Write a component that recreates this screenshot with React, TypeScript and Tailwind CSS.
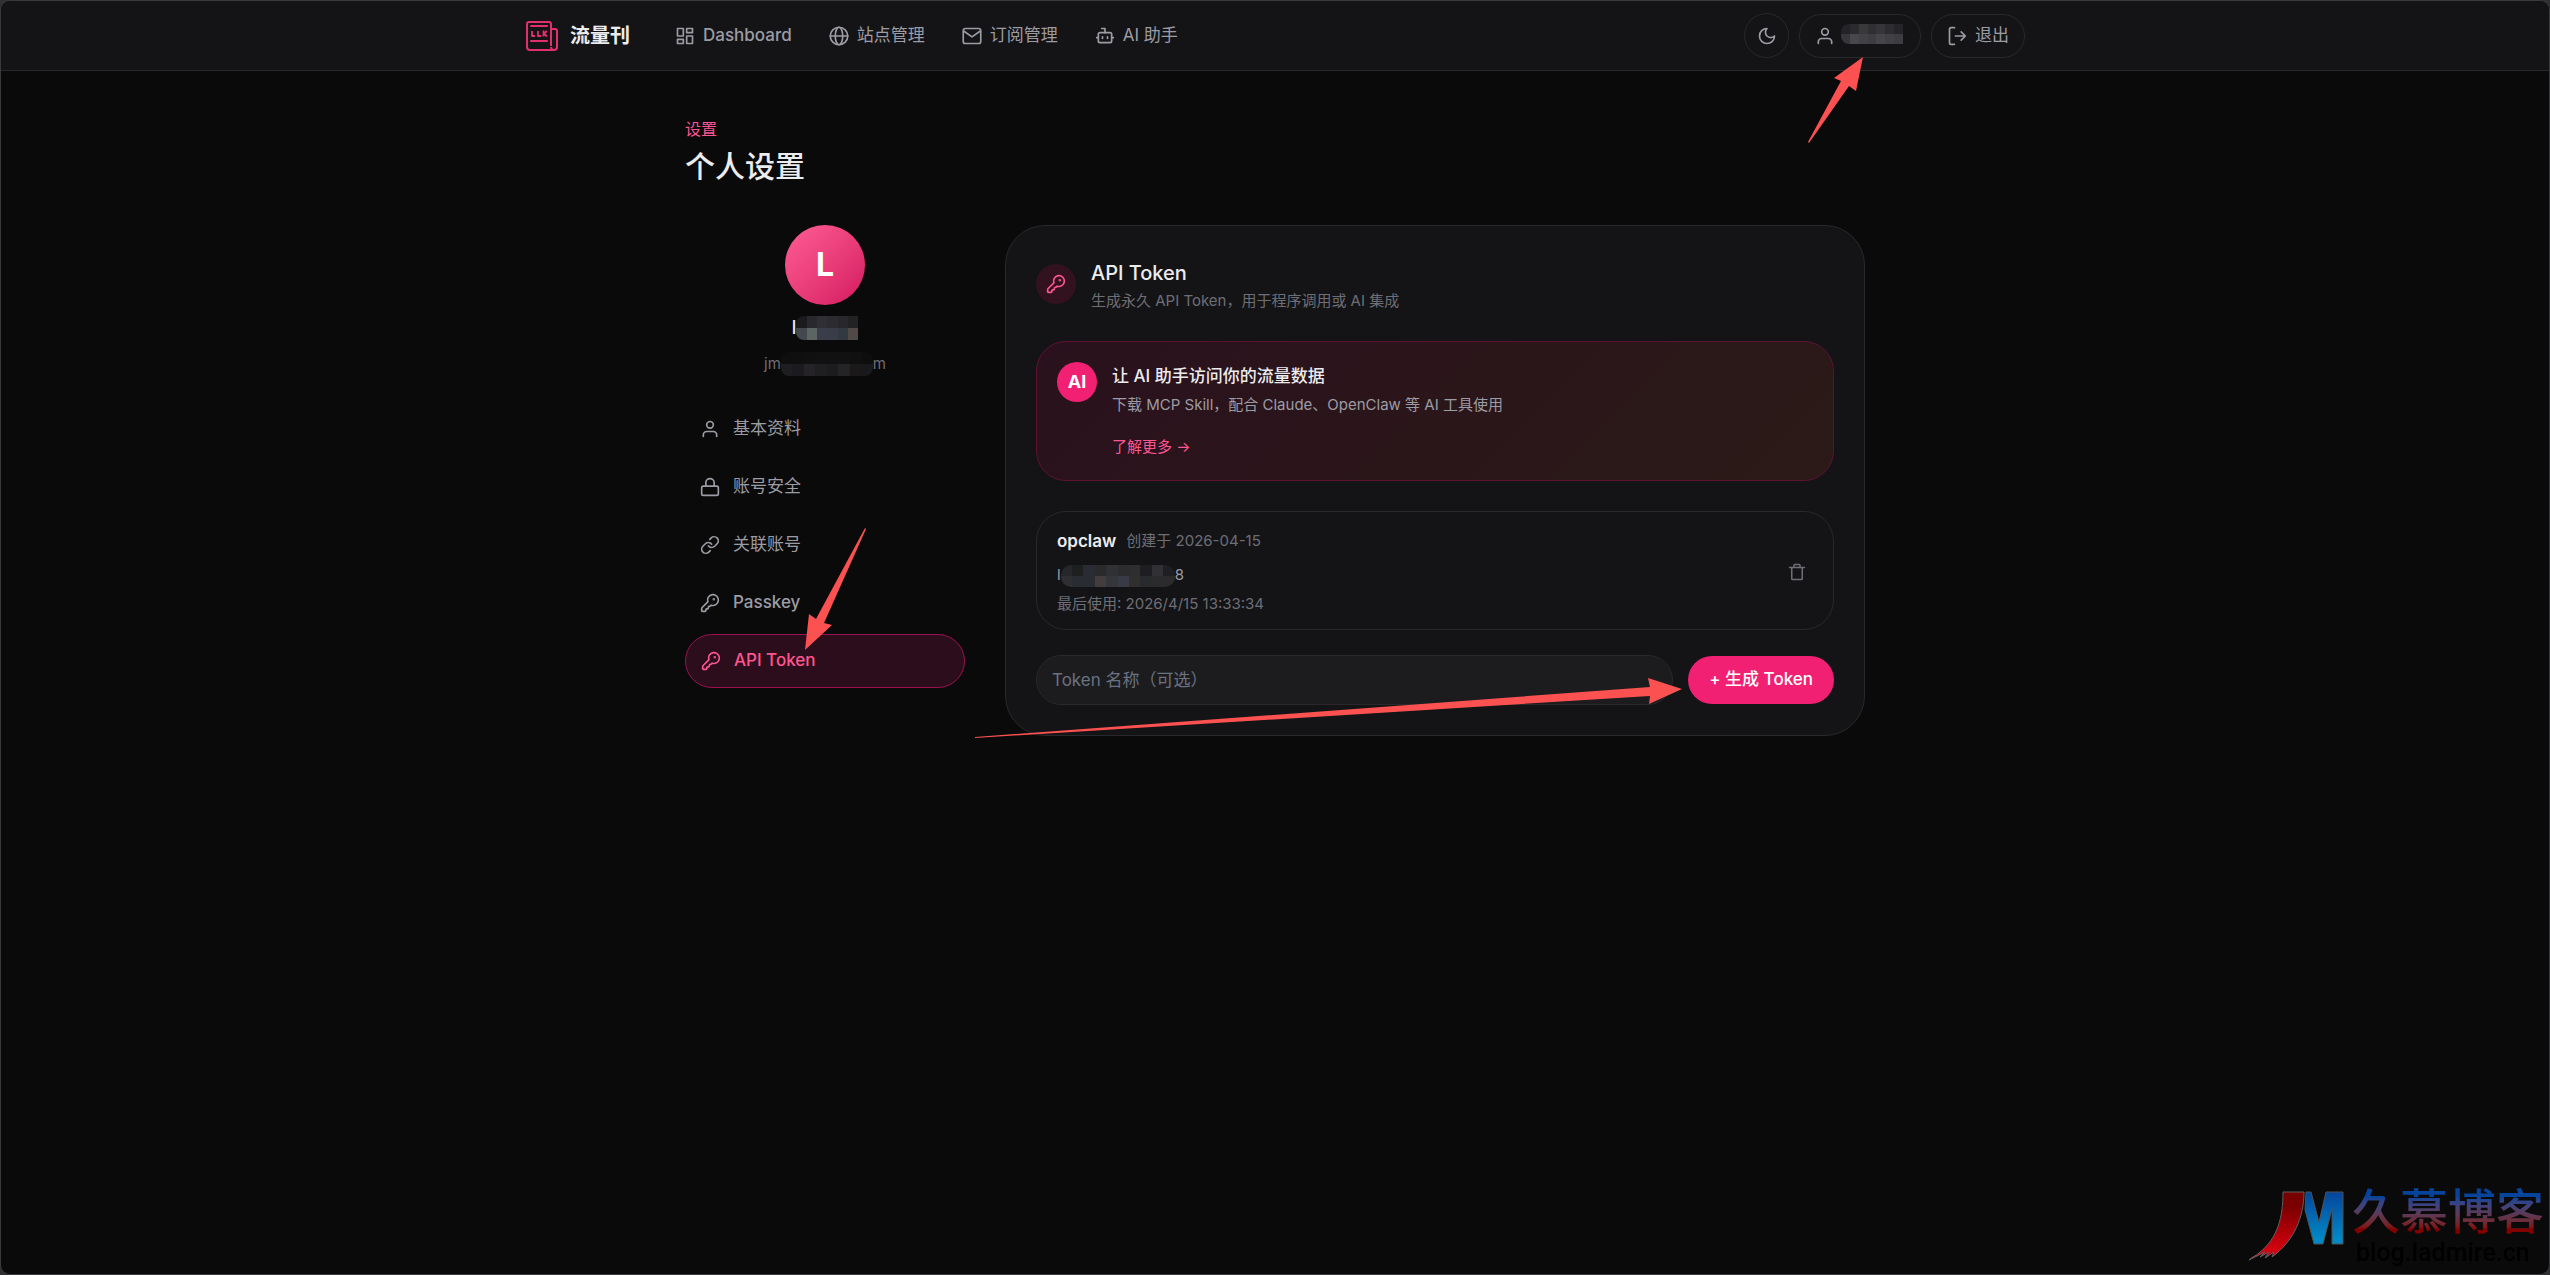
import type { ReactNode } from "react";

const stroke = {
  viewBox: "0 0 24 24",
  fill: "none",
  stroke: "currentColor",
  strokeWidth: 2,
  strokeLinecap: "round",
  strokeLinejoin: "round",
  "aria-hidden": true,
} as const;

function BrandIcon() {
  return (
    <svg className="h-[30px] w-8" viewBox="0 0 32 30" fill="none" stroke="#e1306c" strokeWidth="2" strokeLinejoin="round" aria-hidden="true">
      <path d="M27 29H4a3 3 0 0 1-3-3V3a2 2 0 0 1 2-2h20a2 2 0 0 1 2 2v22" />
      <path d="M25 8h4a2 2 0 0 1 2 2v16a3 3 0 0 1-6 0" />
      <path d="M5 5h16M5 20h16" strokeLinecap="round" />
      <path d="M6 10v5h3M12 10v5h3M17.500 9.500v6M21 10l-3 2.500 3 3" strokeWidth="1.800" />
    </svg>
  );
}
const DashIcon = () => (
  <svg {...stroke} className="size-5">
    <path d="M3 3h7v9H3zM14 3h7v5h-7zM14 12h7v9h-7zM3 16h7v5H3z" />
  </svg>
);
const GlobeIcon = () => (
  <svg {...stroke} className="size-5">
    <circle cx="12" cy="12" r="10.500" />
    <ellipse cx="12" cy="12" rx="4.500" ry="10.500" />
    <path d="M1.500 12h21" />
  </svg>
);
const MailIcon = () => (
  <svg {...stroke} className="size-5">
    <rect x="1.500" y="3" width="21" height="18" rx="2.500" />
    <path d="m2 6 10 7 10-7" />
  </svg>
);
const BotIcon = () => (
  <svg {...stroke} className="size-5">
    <path d="M12 8V3H8" />
    <rect x="4" y="8" width="16" height="12" rx="2" />
    <path d="M2 14h2M20 14h2M15 13v2M9 13v2" />
  </svg>
);
const MoonIcon = () => (
  <svg {...stroke} className="size-5">
    <path d="M12 3a6 6 0 0 0 9 9 9 9 0 1 1-9-9Z" />
  </svg>
);
const UserIcon = () => (
  <svg {...stroke} className="size-5">
    <circle cx="12" cy="7" r="4" />
    <path d="M20 21v-2a4 4 0 0 0-4-4H8a4 4 0 0 0-4 4v2" />
  </svg>
);
const ExitIcon = () => (
  <svg {...stroke} className="size-5">
    <path d="M9 2H5a2 2 0 0 0-2 2v16a2 2 0 0 0 2 2h4M10 12h12M17 7l5 5-5 5" />
  </svg>
);
const LockIcon = () => (
  <svg {...stroke} className="size-5">
    <rect x="2" y="11" width="20" height="11" rx="2" />
    <path d="M7 11V7a5 5 0 0 1 10 0v4" />
  </svg>
);
const LinkIcon = () => (
  <svg {...stroke} className="size-5">
    <path d="M10 13a5 5 0 0 0 7.540.540l3-3a5 5 0 0 0-7.070-7.070l-1.720 1.710" />
    <path d="M14 11a5 5 0 0 0-7.540-.540l-3 3a5 5 0 0 0 7.070 7.070l1.710-1.710" />
  </svg>
);
const KeyIcon = () => (
  <svg {...stroke} className="size-5">
    <path d="M2.586 17.414A2 2 0 0 0 2 18.828V21a1 1 0 0 0 1 1h3a1 1 0 0 0 1-1v-1a1 1 0 0 1 1-1h1a1 1 0 0 0 1-1v-1a1 1 0 0 1 1-1h.172a2 2 0 0 0 1.414-.586l.814-.814a6.500 6.500 0 1 0-4-4z" />
    <circle cx="16.500" cy="7.500" r=".5" fill="currentColor" />
  </svg>
);
const TrashIcon = () => (
  <svg {...stroke} className="size-[18px]">
    <path d="M2 6h20M5 6v15a1 1 0 0 0 1 1h12a1 1 0 0 0 1-1V6M8 6V3a1 1 0 0 1 1-1h6a1 1 0 0 1 1 1v3" />
  </svg>
);

const navLinks = [
  { label: "Dashboard", icon: <DashIcon />, weight: "font-medium" },
  { label: "站点管理", icon: <GlobeIcon />, weight: "font-normal" },
  { label: "订阅管理", icon: <MailIcon />, weight: "font-normal" },
  { label: "AI 助手", icon: <BotIcon />, weight: "font-normal" },
];

const tabs = [
  { label: "基本资料", icon: <UserIcon />, weight: "font-normal" },
  { label: "账号安全", icon: <LockIcon />, weight: "font-normal" },
  { label: "关联账号", icon: <LinkIcon />, weight: "font-normal" },
  { label: "Passkey", icon: <KeyIcon />, weight: "font-medium" },
];

function Mosaic({ className, rows }: { className: string; rows: string[][] }) {
  return (
    <span className={`flex flex-col overflow-hidden ${className}`} aria-hidden="true">
      {rows.map((row, r) => (
        <span key={r} className="flex flex-1">
          {row.map((color, c) => (
            <span key={c} className="flex-1" style={{ backgroundColor: color }} />
          ))}
        </span>
      ))}
    </span>
  );
}

function Arrow({ className, size, points }: { className: string; size: [number, number]; points: string }) {
  return (
    <svg
      className={`pointer-events-none absolute z-10 max-w-none ${className}`}
      width={size[0]}
      height={size[1]}
      viewBox={`0 0 ${size[0]} ${size[1]}`}
      aria-hidden="true"
    >
      <polygon points={points} fill="#fb5151" />
    </svg>
  );
}

function Badge({ className, children }: { className: string; children: ReactNode }) {
  return <span className={`flex size-10 shrink-0 items-center justify-center rounded-full ${className}`}>{children}</span>;
}

function Header() {
  return (
    <header className="border-b border-[#29292c] bg-[#141416]">
      <div className="mx-auto flex h-[69px] max-w-[1500px] items-center justify-between">
        <div className="flex items-center">
          <a href="#" className="flex items-center gap-3 pl-px text-xl font-semibold text-[#ececee]">
            <BrandIcon />
            流量刊
          </a>
          <nav className="ml-[45px] flex items-center gap-[37px]">
            {navLinks.map((l) => (
              <a key={l.label} href="#" className={`flex items-center gap-2 ${l.weight}`}>
                {l.icon}
                {l.label}
              </a>
            ))}
          </nav>
        </div>
        <div className="flex items-center gap-2.5">
          <button type="button" aria-label="主题" className="flex size-[45px] items-center justify-center rounded-full border border-[#29292c]">
            <MoonIcon />
          </button>
          <div className="relative">
            <button type="button" aria-label="用户" className="flex h-11 w-[122px] items-center gap-1.5 rounded-full border border-[#29292c] pl-[15px]">
              <UserIcon />
              <Mosaic
                className="mb-1 h-5 w-[62px] rounded-l-lg"
                rows={[
                  ["#242327", "#2b2b2e", "#39393c", "#303034", "#36363a", "#2d2d31", "#252528"],
                  ["#37373b", "#48484c", "#424246", "#3e3e42", "#45454a", "#404045", "#3c3c41"],
                ]}
              />
            </button>
            <Arrow className="top-[43px] left-[9px]" size={[56, 86]} points="55,0 26,21 33,24 0,85 1,86 41,29 48,34" />
          </div>
          <button type="button" className="flex h-11 items-center gap-2 rounded-full border border-[#29292c] px-[15px]">
            <ExitIcon />
            退出
          </button>
        </div>
      </div>
    </header>
  );
}

function Sidebar() {
  return (
    <aside className="w-[280px] shrink-0">
      <div className="flex flex-col items-center">
        <div className="flex size-20 items-center justify-center rounded-full bg-linear-135 from-[#ff5c95] to-[#d4145f] text-[32px] font-bold text-white">
          L
        </div>
        <div className="mt-[11px] flex h-6 items-center text-lg font-medium text-[#ececee]">
          l
          <Mosaic
            className="h-6 w-[62px] rounded-l-lg"
            rows={[
              ["#1b1b1d", "#29292d", "#2f2f35", "#2b2b30", "#28282c", "#222224"],
              ["#43484f", "#5d6464", "#3b3d4b", "#3a3c4a", "#323941", "#504945"],
            ]}
          />
        </div>
        <div className="mt-3 flex h-6 items-center text-[15px] text-[#6e6e76]">
          jm
          <Mosaic
            className="h-6 w-[92px] rounded-lg"
            rows={[
              ["#0e0e0f", "#0f0f10", "#101011", "#111112", "#111113", "#111112", "#101011", "#0e0e0f"],
              ["#1e1d1f", "#1b1b1f", "#252327", "#1f1f21", "#1c1c1f", "#242427", "#1c191a", "#18191d"],
            ]}
          />
          m
        </div>
      </div>
      <nav className="mt-[26px] flex flex-col gap-1">
        {tabs.map((t) => (
          <button key={t.label} type="button" className={`flex h-[54px] items-center gap-[13px] px-[15px] ${t.weight}`}>
            {t.icon}
            {t.label}
          </button>
        ))}
        <div className="relative">
          <button
            type="button"
            aria-current="page"
            className="flex h-[54px] w-full items-center gap-[13px] rounded-full border border-[#9c1150] bg-[#2b0d1b] px-[15px] font-medium text-[#ff5590]"
          >
            <KeyIcon />
            API Token
          </button>
          <Arrow className="-top-[106px] left-[120px]" size={[62, 122]} points="0,122 4,86 11,91 60,0 61,1 19,95 27,97" />
        </div>
      </nav>
    </aside>
  );
}

function TokenPanel() {
  return (
    <section className="min-w-0 flex-1 rounded-[40px] border border-[#29292c] bg-[#141416] p-[30px]">
      <div className="flex items-center gap-[15px]">
        <Badge className="bg-[#32121f] text-[#ff5590]">
          <KeyIcon />
        </Badge>
        <div>
          <h2 className="text-xl leading-[34px] font-medium text-[#ececee]">API Token</h2>
          <p className="text-[15px] leading-[22px] text-[#6e6e76]">生成永久 API Token，用于程序调用或 AI 集成</p>
        </div>
      </div>

      <div className="mt-[29px] flex gap-[15px] rounded-[30px] border border-[#5e1232] bg-linear-135 from-[#2a111d] to-[#2b1a17] p-5">
        <Badge className="bg-[#f12072] text-lg font-bold text-white">AI</Badge>
        <div>
          <h3 className="text-[17px] leading-7 font-medium text-[#ececee]">让 AI 助手访问你的流量数据</h3>
          <p className="mt-[3px] text-[15px] leading-6">下载 MCP Skill，配合 Claude、OpenClaw 等 AI 工具使用</p>
          <a href="#" className="mt-[18px] inline-block text-[15px] leading-6 text-[#ff5590]">
            了解更多 →
          </a>
        </div>
      </div>

      <div className="mt-[30px] flex items-center justify-between rounded-[30px] border border-[#29292c] px-5 pt-4 pb-[13px]">
        <div>
          <div className="flex h-7 items-center gap-2.5">
            <span className="font-semibold text-[#ececee]">opclaw</span>
            <span className="text-[15px] text-[#6e6e76]">创建于 2026-04-15</span>
          </div>
          <div className="mt-2 flex h-6 items-center text-[15px]">
            l
            <Mosaic
              className="h-[22px] w-[114px] rounded-[10px]"
              rows={[
                ["#26272a", "#1e1f21", "#292d33", "#2a2a2d", "#303135", "#2c2b2d", "#2f2d2e", "#1e1e22", "#313135", "#1f1e22"],
                ["#2f2f33", "#292c33", "#292c33", "#433d3f", "#35363c", "#383b45", "#312f2e", "#292a2e", "#2b2a2c", "#2d2a2c"],
              ]}
            />
            8
          </div>
          <p className="mt-1 text-[15px] leading-6 text-[#6e6e76]">最后使用: 2026/4/15 13:33:34</p>
        </div>
        <button type="button" aria-label="删除" className="mr-[7px] text-[#6e6e76]">
          <TrashIcon />
        </button>
      </div>

      <div className="mt-[25px] flex items-center gap-[15px]">
        <input
          type="text"
          aria-label="Token 名称"
          placeholder="Token 名称（可选）"
          className="h-[50px] min-w-0 flex-1 rounded-full border border-[#29292c] bg-[#1c1c1e] px-[15px] placeholder:text-[#6a7282]"
        />
        <div className="relative">
          <button type="button" className="h-12 rounded-full bg-[#f12072] px-[21px] font-medium text-white">
            + 生成 Token
          </button>
          <Arrow className="top-[22px] right-[152px]" size={[707, 60]} points="707,11 673,0 675,9 0,59 0,60 675,18 674,26" />
        </div>
      </div>
    </section>
  );
}

function Watermark() {
  return (
    <div className="absolute right-[5px] bottom-[5px] flex items-start gap-2 opacity-95">
      <svg className="mt-1 h-[72px] w-[96px]" viewBox="0 0 96 72" aria-hidden="true">
        <defs>
          <linearGradient id="wm-red" x1="0" y1="0" x2="0" y2="1">
            <stop offset="0.200" stopColor="#7f0000" />
            <stop offset="0.850" stopColor="#e00010" />
          </linearGradient>
          <linearGradient id="wm-blue" x1="0" y1="0" x2="0" y2="1">
            <stop offset="0" stopColor="#0648a4" />
            <stop offset="0.900" stopColor="#0090d0" />
          </linearGradient>
        </defs>
        <path
          d="M35 1H56C56 26 46 50 24 66L26 61 17 67 21 61 12 66 17 61 1 69C5 65 8 65 11 62C30 47 35 26 35 1Z"
          fill="url(#wm-red)"
          stroke="#666"
        />
        <path d="M58 1H63L71 31 78 1H95V53H84V18L75 53H66L57 19Z" fill="url(#wm-blue)" stroke="#555" />
      </svg>
      <div className="flex flex-col">
        <span className="bg-linear-to-b from-[#0648a4] from-20% to-[#8a0000] to-85% bg-clip-text text-5xl leading-[50px] font-medium text-transparent">
          久慕博客
        </span>
        <span className="pl-1 font-['Roboto'] text-[25px] leading-8 font-medium text-black">blog.ladmire.cn</span>
      </div>
    </div>
  );
}

export default function App() {
  return (
    <div className="bg-[#303033]">
      <div className="relative flex min-h-screen flex-col overflow-hidden rounded-[10px] border border-[#3a3a3d] bg-[#0a0a0a] font-['Inter','Noto_Sans_CJK_SC',sans-serif] text-[17px] text-[#9c9ca5]">
        <Header />
        <main className="mx-auto w-full max-w-[1180px] pt-[46px]">
          <p className="text-base leading-6 text-[#ff5590]">设置</p>
          <h1 className="mt-1 text-3xl leading-[42px] font-medium text-[#ececee]">个人设置</h1>
          <div className="mt-[38px] flex items-start gap-10">
            <Sidebar />
            <TokenPanel />
          </div>
        </main>
        <Watermark />
      </div>
    </div>
  );
}
